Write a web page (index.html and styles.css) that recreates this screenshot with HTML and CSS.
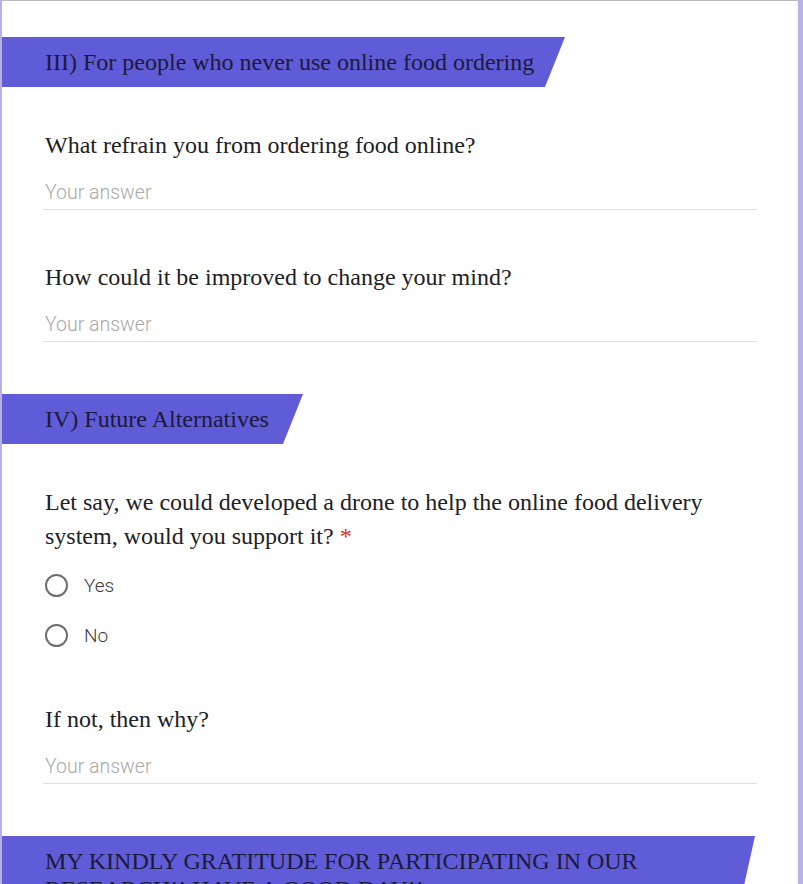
FILE: index.html
```html
<!DOCTYPE html>
<html>
<head>
<meta charset="utf-8">
<link rel="stylesheet" href="styles.css">
</head>
<body>
<div class="card">
  <div class="section-head head-3">III) For people who never use online food ordering</div>
  <div class="question first">
    <div class="q-title">What refrain you from ordering food online?</div>
    <div class="answer">Your answer</div>
  </div>
  <div class="question">
    <div class="q-title">How could it be improved to change your mind?</div>
    <div class="answer">Your answer</div>
  </div>
  <div class="section-head head-4">IV) Future Alternatives</div>
  <div class="question first">
    <div class="q-title">Let say, we could developed a drone to help the online food delivery system, would you support it? <span class="req">*</span></div>
    <div class="options">
      <div class="option"><span class="radio"></span><span class="opt-label">Yes</span></div>
      <div class="option"><span class="radio"></span><span class="opt-label">No</span></div>
    </div>
  </div>
  <div class="question after-options">
    <div class="q-title">If not, then why?</div>
    <div class="answer">Your answer</div>
  </div>
  <div class="section-head head-final">MY KINDLY GRATITUDE FOR PARTICIPATING IN OUR RESEARCH!! HAVE A GOOD DAY!!</div>
</div>
</body>
</html>
```
FILE: styles.css
```css
html, body {
  margin: 0;
  padding: 0;
}
body {
  background: #b8b2e4;
  height: 884px;
  overflow: hidden;
}
.card {
  margin-left: 2px;
  width: 796px;
  background: #ffffff;
  border-top: 1px solid #b9b9c6;
  padding-top: 36px;
  min-height: 900px;
  box-shadow: inset -6px 0 6px -6px rgba(0,0,0,0.08);
}
.section-head {
  box-sizing: border-box;
  background: #605bd6;
  color: #1b1a3c;
  font-family: "Liberation Serif", serif;
  font-size: 24px;
  line-height: 50px;
  height: 50px;
  padding-left: 43px;
  clip-path: polygon(0 0, 100% 0, calc(100% - 20px) 100%, 0 100%);
  white-space: nowrap;
}
.head-3 { width: 563px; }
.head-4 { width: 301px; margin-top: 52px; }
.head-final {
  width: 753px;
  margin-top: 52px;
  height: 90px;
  line-height: 28px;
  padding-top: 11px;
  padding-right: 90px;
  white-space: normal;
}
.question {
  margin-left: 41px;
  width: 714px;
  margin-top: 50px;
}
.question.first { margin-top: 41px; }
.question.after-options { margin-top: 42px; }
.q-title {
  font-family: "Liberation Serif", serif;
  font-size: 24px;
  line-height: 34px;
  color: #202124;
  padding-left: 2px;
  padding-right: 40px;
}
.req { color: #d93025; }
.answer {
  margin-top: 19px;
  font-family: Roboto, sans-serif;
  font-weight: 300;
  font-size: 19.5px;
  line-height: 24px;
  color: #a8a8a8;
  padding-left: 2px;
  padding-bottom: 4px;
  border-bottom: 1px solid #e0e0e0;
}
.options {
  margin-top: 7px;
}
.option {
  display: flex;
  align-items: center;
  height: 50px;
  padding-left: 2px;
}
.radio {
  box-sizing: border-box;
  width: 23px;
  height: 23px;
  border: 2.5px solid #6e6e6e;
  border-radius: 50%;
  flex: none;
}
.opt-label {
  margin-left: 16px;
  font-family: Roboto, sans-serif;
  font-weight: 300;
  font-size: 19px;
  color: #3c3c3c;
}
```
